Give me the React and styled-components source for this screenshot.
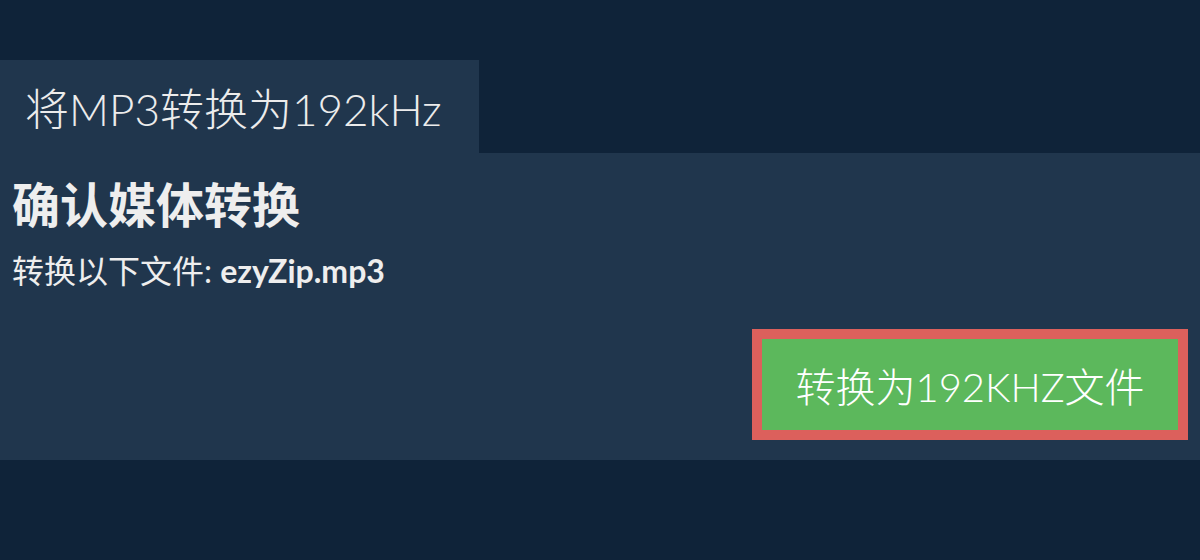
import React from 'react'
import styled, { createGlobalStyle } from 'styled-components'

const GlobalStyle = createGlobalStyle`
  html, body {
    margin: 0;
    padding: 0;
    background: #0f2339;
  }
  body {
    font-family: Lato, "Noto Sans CJK SC", sans-serif;
    color: #eeeeee;
  }
`;

const Page = styled.div`
  width: 1200px;
  height: 560px;
  padding-top: 60px;
  box-sizing: border-box;
  background: #0f2339;
`;

const Tab = styled.div`
  width: 479px;
  height: 93px;
  box-sizing: border-box;
  padding-left: 25px;
  display: flex;
  align-items: center;
  background: #20364d;
  font-size: 44px;
  font-weight: 300;
  color: #ececec;
`;

const Panel = styled.div`
  height: 307px;
  box-sizing: border-box;
  padding: 20px 12px 0 12px;
  background: #20364d;
  display: flex;
  flex-direction: column;
`;

const Heading = styled.h2`
  margin: 0;
  font-size: 48px;
  font-weight: 700;
  line-height: 64px;
  color: #eeeeee;
`;

const FileLine = styled.p`
  margin: 14px 0 0;
  font-size: 32px;
  line-height: 40px;
  color: #eeeeee;
  b {
    font-weight: 700;
  }
`;

const Actions = styled.div`
  margin-top: 38px;
  display: flex;
  justify-content: flex-end;
`;

const ConvertButton = styled.button`
  width: 436px;
  height: 111px;
  box-sizing: border-box;
  border: 10px solid #dc605c;
  background: #5cb85c;
  color: #ffffff;
  font-family: Lato, "Noto Sans CJK SC", sans-serif;
  font-size: 40px;
  font-weight: 300;
  cursor: pointer;
  padding: 0;
`;

export default function App() {
  return (
    <>
      <GlobalStyle />
      <Page>
        <Tab>将MP3转换为192kHz</Tab>
        <Panel>
          <Heading>确认媒体转换</Heading>
          <FileLine>
            转换以下文件: <b>ezyZip.mp3</b>
          </FileLine>
          <Actions>
            <ConvertButton>转换为192KHZ文件</ConvertButton>
          </Actions>
        </Panel>
      </Page>
    </>
  )
}
